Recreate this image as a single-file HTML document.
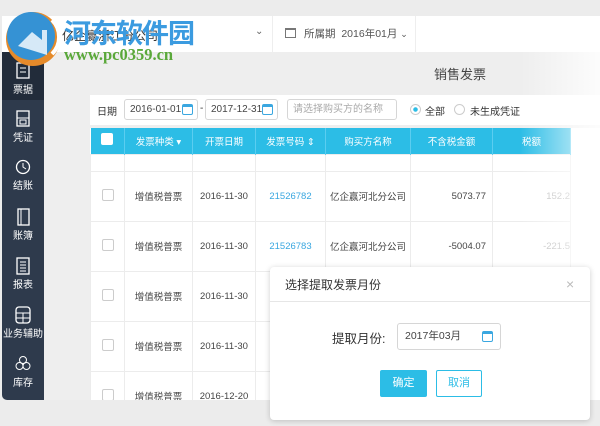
<!DOCTYPE html>
<html><head><meta charset="utf-8"><style>
*{margin:0;padding:0;box-sizing:border-box}
body{width:600px;height:426px;overflow:hidden;background:#ececec;font-family:"Liberation Sans","Noto Sans CJK SC",sans-serif;position:relative;color:#333}
.abs{position:absolute}
.topbar{left:2px;top:16px;width:598px;height:36px;background:#fff}
.side{left:2px;top:52px;width:42px;height:348px;background:#2e3a4c;border-bottom-left-radius:5px}
.side .it{position:absolute;left:0;width:42px;text-align:center;color:#fff;font-size:10px}
.side svg{display:block;margin:0 auto 1px}
.content{left:44px;top:52px;width:556px;height:348px;background:#eeeeee}
th,td{font-size:9.5px}
.wrap{position:absolute;left:90px;top:128px;width:510px;height:272px;background:#fff;overflow:hidden}
table{border-collapse:collapse;table-layout:fixed}
th{background:#2cbde6;color:#fff;height:26px;font-weight:normal;border-right:1px solid #5bcdf0}
td{height:50px;border:1px solid #ececec;text-align:center;color:#444}
tr.short td{height:17px}
.cb{display:inline-block;width:12px;height:12px;border:1px solid #ccc;border-radius:2px;background:#fff}
.fade{left:520px;top:16px;width:80px;height:384px;background:linear-gradient(90deg,rgba(255,255,255,0),rgba(255,255,255,.85))}
.inp{background:#fff;border:1px solid #d6d6d6;border-radius:3px;height:21px;font-size:10px;line-height:19px;padding-left:5px;color:#444}
.cal{position:absolute;right:4px;top:4px;width:11px;height:11px;border:1.5px solid #3aa7e0;border-radius:2px;border-top-width:3px}
</style></head><body>
<div class="abs topbar"></div>
<div class="abs" style="left:62px;top:27px;font-size:12px">亿企赢浙江分公司</div>
<div class="abs" style="left:255px;top:26px;font-size:10px;color:#666">⌄</div>
<div class="abs" style="left:272px;top:16px;width:1px;height:36px;background:#eee"></div>
<div class="abs" style="left:285px;top:28px;width:11px;height:10px;border:1px solid #777;border-top-width:2px"></div>
<div class="abs" style="left:304px;top:26px;font-size:10.5px;color:#555">所属期&nbsp; 2016年01月 <span style="font-size:9px">⌄</span></div>
<div class="abs" style="left:415px;top:16px;width:1px;height:36px;background:#eee"></div>
<div class="abs content"></div>
<div class="abs" style="left:434px;top:64px;font-size:13px;color:#444">销售发票</div>
<div class="abs" style="left:90px;top:95px;width:510px;height:30px;background:#fff"></div>
<div class="abs" style="left:97px;top:103px;font-size:10px">日期</div>
<div class="abs inp" style="left:124px;top:99px;width:74px">2016-01-01<span class="cal"></span></div>
<div class="abs" style="left:200px;top:103px;font-size:10px">-</div>
<div class="abs inp" style="left:205px;top:99px;width:73px">2017-12-31<span class="cal"></span></div>
<div class="abs inp" style="left:287px;top:99px;width:110px;color:#aaa">请选择购买方的名称</div>
<div class="abs" style="left:410px;top:104px;width:11px;height:11px;border-radius:50%;border:1px solid #ccc;background:radial-gradient(#2cbde6 2px,#fff 2.5px)"></div>
<div class="abs" style="left:425px;top:103px;font-size:10px">全部</div>
<div class="abs" style="left:454px;top:104px;width:11px;height:11px;border-radius:50%;border:1px solid #ccc;background:#fff"></div>
<div class="abs" style="left:470px;top:103px;font-size:10px">未生成凭证</div>
<div class="wrap">
<table style="width:480px">
<colgroup><col style="width:34px"><col style="width:68px"><col style="width:63px"><col style="width:70px"><col style="width:85px"><col style="width:82px"><col style="width:78px"></colgroup>
<tr><th><span class="cb" style="border:none"></span></th><th>发票种类 ▾</th><th>开票日期</th><th>发票号码 ⇕</th><th>购买方名称</th><th>不含税金额</th><th>税额</th></tr>
<tr class="short"><td></td><td></td><td></td><td></td><td></td><td></td><td></td></tr>
<tr><td><span class="cb"></span></td><td>增值税普票</td><td>2016-11-30</td><td style="color:#3aa7e0">21526782</td><td>亿企赢河北分公司</td><td style="text-align:right;padding-right:6px">5073.77</td><td style="text-align:right;color:#bbb">152.2</td></tr>
<tr><td><span class="cb"></span></td><td>增值税普票</td><td>2016-11-30</td><td style="color:#3aa7e0">21526783</td><td>亿企赢河北分公司</td><td style="text-align:right;padding-right:6px">-5004.07</td><td style="text-align:right;color:#bbb">-221.5</td></tr>
<tr><td><span class="cb"></span></td><td>增值税普票</td><td>2016-11-30</td><td></td><td></td><td></td><td></td></tr>
<tr><td><span class="cb"></span></td><td>增值税普票</td><td>2016-11-30</td><td></td><td></td><td></td><td></td></tr>
<tr><td><span class="cb"></span></td><td>增值税普票</td><td>2016-12-20</td><td></td><td></td><td></td><td></td></tr>
</table>
</div>
<div class="abs fade"></div>
<div class="abs side">
<div class="it" style="background:#222c3a;height:48px;top:0;padding-top:10px"><svg width="16" height="18"><rect x="2" y="1" width="12" height="15" fill="none" stroke="#fff" stroke-width="1.3"/><line x1="5" y1="6" x2="11" y2="6" stroke="#fff"/><line x1="5" y1="10" x2="11" y2="10" stroke="#fff"/></svg>票据</div>
<div class="it" style="top:58px"><svg width="16" height="18"><rect x="2" y="1" width="12" height="15" fill="none" stroke="#fff" stroke-width="1.3"/><line x1="2" y1="8" x2="14" y2="8" stroke="#fff"/><rect x="5" y="10" width="6" height="4" fill="none" stroke="#fff"/></svg>凭证</div>
<div class="it" style="top:106px"><svg width="16" height="18"><circle cx="8" cy="9" r="6.5" fill="none" stroke="#fff" stroke-width="1.3"/><path d="M8 5v4l3 2" stroke="#fff" fill="none"/></svg>结账</div>
<div class="it" style="top:156px"><svg width="16" height="18"><rect x="3" y="1" width="11" height="16" fill="none" stroke="#fff" stroke-width="1.3"/><line x1="6" y1="1" x2="6" y2="17" stroke="#fff"/></svg>账簿</div>
<div class="it" style="top:205px"><svg width="16" height="18"><rect x="2" y="1" width="12" height="16" fill="none" stroke="#fff" stroke-width="1.3"/><path d="M5 5h6M5 8h6M5 11h6M5 14h6" stroke="#fff"/></svg>报表</div>
<div class="it" style="top:254px"><svg width="16" height="18"><rect x="1" y="1" width="14" height="16" rx="3" fill="none" stroke="#fff" stroke-width="1.3"/><path d="M1 7h14M1 12h14M8 7v10" stroke="#fff"/></svg>业务辅助</div>
<div class="it" style="top:303px"><svg width="16" height="18"><circle cx="8" cy="5" r="3.5" fill="none" stroke="#fff"/><circle cx="4.5" cy="11" r="3.5" fill="none" stroke="#fff"/><circle cx="11.5" cy="11" r="3.5" fill="none" stroke="#fff"/></svg>库存</div>
</div>
<div class="abs" style="left:270px;top:267px;width:320px;height:153px;background:#fff;border-radius:4px;box-shadow:0 1px 6px rgba(0,0,0,.2)"></div>
<div class="abs" style="left:270px;top:301px;width:320px;height:1px;background:#e6e6e6"></div>
<div class="abs" style="left:285px;top:276px;font-size:12px;color:#333">选择提取发票月份</div>
<div class="abs" style="left:566px;top:276px;font-size:14px;color:#bbb">×</div>
<div class="abs" style="left:332px;top:328px;font-size:12.5px;color:#333">提取月份:</div>
<div class="abs inp" style="left:397px;top:323px;width:104px;height:27px;line-height:25px;padding-left:7px;font-size:10.5px">2017年03月<span class="cal" style="right:7px;top:7px"></span></div>
<div class="abs" style="left:380px;top:370px;width:47px;height:27px;background:#2cbde6;border-radius:2px;color:#fff;font-size:11px;text-align:center;line-height:27px">确定</div>
<div class="abs" style="left:436px;top:370px;width:46px;height:27px;border:1px solid #2cbde6;border-radius:2px;color:#2cbde6;font-size:11px;text-align:center;line-height:25px;background:#fff">取消</div>
<svg class="abs" style="left:4px;top:10px" width="58" height="58"><circle cx="29" cy="29" r="27" fill="#e58a2a"/><circle cx="27" cy="26" r="24" fill="#3592d4"/><path d="M14 36l14-14 10 8v-10h5v25z" fill="#fff" opacity=".8"/><path d="M48 10a24 24 0 0 1 0 34" stroke="#fff" stroke-width="4" fill="none"/></svg>
<div class="abs" style="left:64px;top:12px;font-size:27px;font-weight:bold;color:#3b9be0;font-family:'Noto Sans CJK SC',sans-serif;letter-spacing:-1px">河东软件园</div>
<div class="abs" style="left:64px;top:45px;font-size:16.5px;font-weight:bold;color:#5aa83a;font-family:'Liberation Serif',serif">www.pc0359.cn</div>
</body></html>
